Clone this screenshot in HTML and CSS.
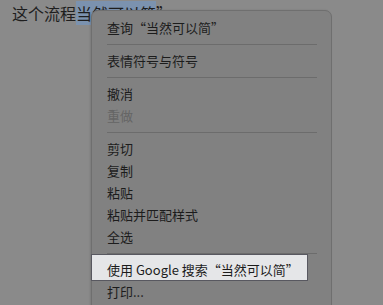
FILE: index.html
```html
<!DOCTYPE html>
<html lang="zh">
<head>
<meta charset="utf-8">
<link rel="stylesheet" href="styles.css">
</head>
<body>
<div class="page">
  <p class="line">这个流程<span class="sel">当然可以简</span>”</p>
  <div class="menu">
    <div class="item">查询“当然可以简”</div>
    <div class="sep"></div>
    <div class="item">表情符号与符号</div>
    <div class="sep"></div>
    <div class="item">撤消</div>
    <div class="item disabled">重做</div>
    <div class="sep"></div>
    <div class="item">剪切</div>
    <div class="item">复制</div>
    <div class="item">粘贴</div>
    <div class="item">粘贴并匹配样式</div>
    <div class="item">全选</div>
    <div class="sep"></div>
    <div class="item hl"><span class="hl-text">使用 Google 搜索“当然可以简”</span></div>
    <div class="item">打印...</div>
  </div>
</div>
</body>
</html>
```
FILE: styles.css
```css
html, body {
  margin: 0;
  padding: 0;
  width: 383px;
  height: 305px;
  overflow: hidden;
  background: #8a8a8a;
  font-family: "Noto Sans CJK SC", "Noto Sans", sans-serif;
}
.page {
  position: relative;
  width: 383px;
  height: 305px;
}
.line {
  margin: 0;
  padding: 3px 0 0 12px;
  font-size: 16px;
  line-height: 21px;
  color: #1e1e1e;
}
.sel {
  background: #7b92af;
}
.menu {
  position: absolute;
  left: 91px;
  top: 10px;
  width: 241px;
  height: 310px;
  box-sizing: border-box;
  padding-top: 6px;
  background: #818181;
  border: 1px solid #6f6f6f;
  border-radius: 7px;
  box-shadow: -1px 0 2px rgba(0,0,0,0.12);
}
.item {
  position: relative;
  height: 22px;
  line-height: 22px;
  padding-left: 15px;
  font-size: 13px;
  color: #1c1c1c;
}
.item.disabled {
  color: #656565;
}
.sep {
  height: 1px;
  margin: 5px 14px 5px 15px;
  background: #6c6c6c;
}
.item.hl::before {
  content: "";
  position: absolute;
  left: -1px;
  top: -5px;
  width: 215px;
  height: 25px;
  background: #e5e6e8;
  border: 1px solid #585860;
}
.hl-text {
  position: relative;
}
```
